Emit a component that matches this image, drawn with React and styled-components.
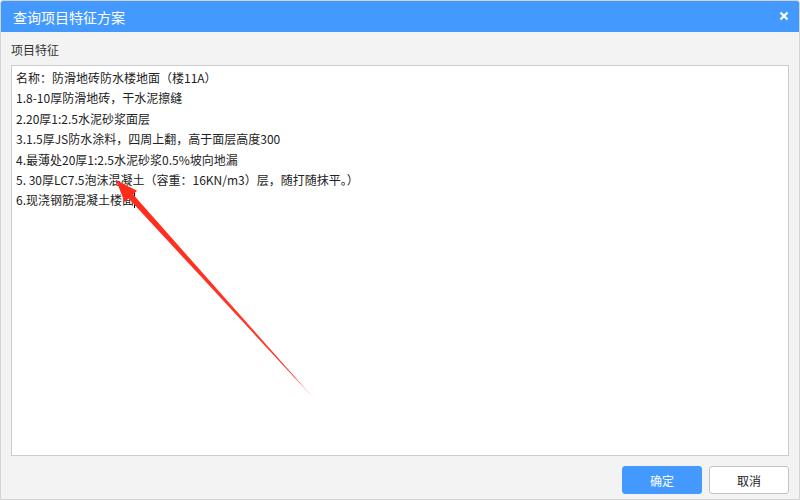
import React from 'react'
import styled, { createGlobalStyle } from 'styled-components'

const GlobalStyle = createGlobalStyle`
  html, body {
    margin: 0;
    padding: 0;
    background: #ffffff;
  }
  * {
    box-sizing: border-box;
  }
`;

const lines = [
  '名称：防滑地砖防水楼地面（楼11A）',
  '1.8-10厚防滑地砖，干水泥擦缝',
  '2.20厚1:2.5水泥砂浆面层',
  '3.1.5厚JS防水涂料，四周上翻，高于面层高度300',
  '4.最薄处20厚1:2.5水泥砂浆0.5%坡向地漏',
  '5. 30厚LC7.5泡沫混凝土（容重：16KN/m3）层，随打随抹平。）',
  '6.现浇钢筋混凝土楼面',
];

function Arrow() {
  return (
    <ArrowLayer width="800" height="500" viewBox="0 0 800 500">
      <defs>
        <linearGradient id="fade" gradientUnits="userSpaceOnUse" x1="116" y1="180" x2="318" y2="403">
          <stop offset="0" stopColor="#ff2b1c" />
          <stop offset="0.88" stopColor="#ff3a2a" />
          <stop offset="1" stopColor="#ff8a7a" stopOpacity="0.25" />
        </linearGradient>
      </defs>
      <polygon
        points="116,180 137,190.8 133.2,194.6 318,403 128.6,198.5 124.6,202.2"
        fill="url(#fade)"
      />
    </ArrowLayer>
  );
}

function App() {
  return (
    <>
      <GlobalStyle />
      <Dialog>
        <TitleBar>
          <Title>查询项目特征方案</Title>
          <CloseButton>
            <svg width="10" height="10" viewBox="0 0 10 10">
              <path d="M1.5 1.5 L8.5 8.5 M8.5 1.5 L1.5 8.5" stroke="#fff" strokeWidth="2.4" />
            </svg>
          </CloseButton>
        </TitleBar>
        <Body>
          <Label>项目特征</Label>
          <TextBox>
            {lines.map((line, i) => (
              <Line key={i}>
                {line}
                {i === lines.length - 1 && <Caret />}
              </Line>
            ))}
          </TextBox>
          <Footer>
            <Button primary>确定</Button>
            <Button>取消</Button>
          </Footer>
        </Body>
        <Arrow />
      </Dialog>
    </>
  );
}

const Dialog = styled.div`
  position: relative;
  width: 800px;
  height: 500px;
  border: 1px solid #d3d3d3;
  border-radius: 3px 3px 0 0;
  background: #f3f3f3;
  display: flex;
  flex-direction: column;
  font-family: "Noto Sans CJK SC", "Noto Sans", sans-serif;
  overflow: hidden;
`;

const TitleBar = styled.div`
  height: 31px;
  background: #4499ff;
  display: flex;
  align-items: center;
  justify-content: space-between;
  padding: 0 10px 0 12px;
`;

const Title = styled.span`
  color: #ffffff;
  font-size: 14px;
`;

const CloseButton = styled.span`
  display: flex;
  align-items: center;
  margin-top: -2px;
`;

const Body = styled.div`
  flex: 1;
  display: flex;
  flex-direction: column;
  padding: 9px 10px 5px 10px;
`;

const Label = styled.div`
  font-size: 12px;
  line-height: 18px;
  color: #333;
  margin-bottom: 6px;
`;

const TextBox = styled.div`
  flex: 1;
  background: #ffffff;
  border: 1px solid #cccccc;
  padding: 2px 4px;
  font-size: 12px;
  color: #222;
`;

const Line = styled.div`
  line-height: 20.4px;
  white-space: nowrap;
`;

const Caret = styled.span`
  display: inline-block;
  width: 1px;
  height: 15px;
  background: #000;
  vertical-align: -3px;
`;

const Footer = styled.div`
  display: flex;
  justify-content: flex-end;
  gap: 7px;
  margin-top: 10px;
`;

const Button = styled.button`
  width: 80px;
  height: 28px;
  border-radius: 3px;
  font-family: inherit;
  font-size: 12px;
  border: 1px solid ${p => (p.primary ? '#4499ff' : '#c4c4c4')};
  background: ${p => (p.primary ? '#4499ff' : '#ffffff')};
  color: ${p => (p.primary ? '#ffffff' : '#222')};
  padding: 0;
`;

const ArrowLayer = styled.svg`
  position: absolute;
  left: -1px;
  top: -1px;
  pointer-events: none;
`;

export default App;
